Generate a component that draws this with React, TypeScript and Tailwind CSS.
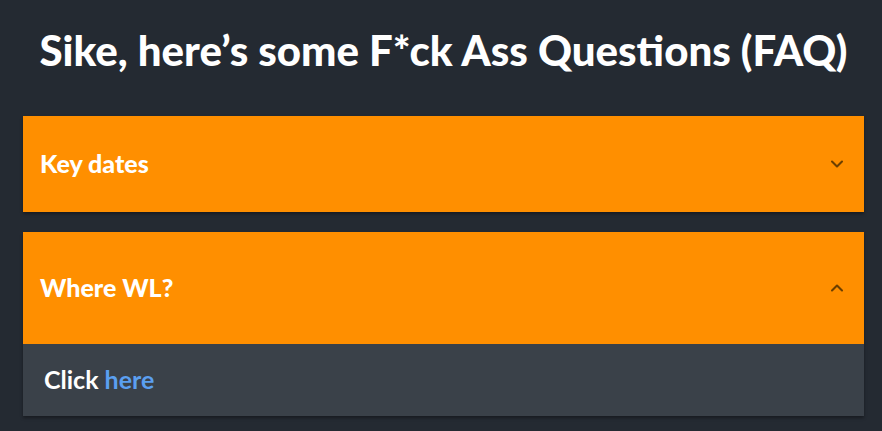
import { ChevronDown, ChevronUp } from 'lucide-react';

export default function App() {
  return (
    <div
      className="min-h-screen bg-[#242a32] pl-[23px] pr-[18px] pt-[20px]"
      style={{ fontFamily: 'Lato, "Noto Sans", sans-serif' }}
    >
      {/* Title */}
      <h1 className="text-center text-[42px] font-black leading-[60px] text-white">
        Sike, here’s some F*ck Ass Questions (FAQ)
      </h1>

      <div className="mt-[36px] flex flex-col gap-5">
        {/* Collapsed item */}
        <div className="shadow-[0_2px_3px_rgba(0,0,0,0.35)]">
          <button className="flex h-[96px] w-full items-center justify-between bg-[#ff8f00] pl-[17px] pr-[17px] text-left">
            <span className="text-[25px] font-black text-white">Key dates</span>
            <ChevronDown className="h-5 w-5 text-[#6b3f00]" strokeWidth={2.5} />
          </button>
        </div>

        {/* Expanded item */}
        <div className="shadow-[0_2px_3px_rgba(0,0,0,0.35)]">
          <button className="flex h-[112px] w-full items-center justify-between bg-[#ff8f00] pl-[17px] pr-[17px] text-left">
            <span className="text-[25px] font-black text-white">Where WL?</span>
            <ChevronUp className="h-5 w-5 text-[#6b3f00]" strokeWidth={2.5} />
          </button>
          <div className="flex h-[72px] items-center bg-[#3a4149] px-[21px]">
            <p className="text-[25px] font-bold text-white">
              Click{' '}
              <a href="#" className="text-[#5b9ff0]">
                here
              </a>
            </p>
          </div>
        </div>
      </div>
    </div>
  );
}
